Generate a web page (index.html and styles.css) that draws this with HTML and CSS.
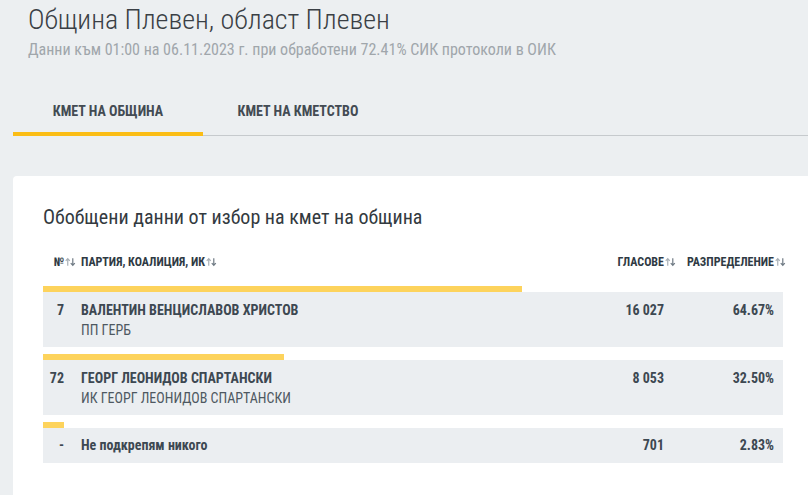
FILE: index.html
```html
<!DOCTYPE html>
<html lang="bg">
<head>
<meta charset="utf-8">
<title>Община Плевен</title>
<link rel="stylesheet" href="styles.css">
</head>
<body>
<header class="page-head">
  <h1 class="title">Община Плевен, област Плевен</h1>
  <p class="subtitle">Данни към 01:00 на 06.11.2023 г. при обработени 72.41% СИК протоколи в ОИК</p>
</header>
<nav class="tabs">
  <a class="tab active">КМЕТ НА ОБЩИНА</a>
  <a class="tab">КМЕТ НА КМЕТСТВО</a>
</nav>
<section class="card">
  <h2 class="card-title">Обобщени данни от избор на кмет на община</h2>
  <div class="table">
    <div class="thead">
      <div class="th num"><span class="sort-wrap">№<svg class="sort" viewBox="0 0 12 10"><path d="M3 9V1.5M0.8 3.7L3 1.3 5.2 3.7" fill="none" stroke="#a9b0b7" stroke-width="1.3"/><path d="M8.5 1v7.5M6.3 6.3L8.5 8.7 10.7 6.3" fill="none" stroke="#6f7a84" stroke-width="1.3"/></svg></span></div>
      <div class="th name"><span class="sort-wrap">ПАРТИЯ, КОАЛИЦИЯ, ИК<svg class="sort" viewBox="0 0 12 10"><path d="M3 9V1.5M0.8 3.7L3 1.3 5.2 3.7" fill="none" stroke="#a9b0b7" stroke-width="1.3"/><path d="M8.5 1v7.5M6.3 6.3L8.5 8.7 10.7 6.3" fill="none" stroke="#6f7a84" stroke-width="1.3"/></svg></span></div>
      <div class="th votes"><span class="sort-wrap">ГЛАСОВЕ<svg class="sort" viewBox="0 0 12 10"><path d="M3 9V1.5M0.8 3.7L3 1.3 5.2 3.7" fill="none" stroke="#a9b0b7" stroke-width="1.3"/><path d="M8.5 1v7.5M6.3 6.3L8.5 8.7 10.7 6.3" fill="none" stroke="#6f7a84" stroke-width="1.3"/></svg></span></div>
      <div class="th pct"><span class="sort-wrap">РАЗПРЕДЕЛЕНИЕ<svg class="sort" viewBox="0 0 12 10"><path d="M3 9V1.5M0.8 3.7L3 1.3 5.2 3.7" fill="none" stroke="#a9b0b7" stroke-width="1.3"/><path d="M8.5 1v7.5M6.3 6.3L8.5 8.7 10.7 6.3" fill="none" stroke="#6f7a84" stroke-width="1.3"/></svg></span></div>
    </div>

    <div class="entry">
      <div class="bar" style="width:64.67%"></div>
      <div class="row">
        <div class="cell num">7</div>
        <div class="cell name"><div class="cand">ВАЛЕНТИН ВЕНЦИСЛАВОВ ХРИСТОВ</div><div class="party">ПП ГЕРБ</div></div>
        <div class="cell votes">16 027</div>
        <div class="cell pct">64.67%</div>
      </div>
    </div>

    <div class="entry">
      <div class="bar" style="width:32.50%"></div>
      <div class="row">
        <div class="cell num">72</div>
        <div class="cell name"><div class="cand">ГЕОРГ ЛЕОНИДОВ СПАРТАНСКИ</div><div class="party">ИК ГЕОРГ ЛЕОНИДОВ СПАРТАНСКИ</div></div>
        <div class="cell votes">8 053</div>
        <div class="cell pct">32.50%</div>
      </div>
    </div>

    <div class="entry">
      <div class="bar" style="width:2.83%"></div>
      <div class="row short">
        <div class="cell num">-</div>
        <div class="cell name"><div class="cand">Не подкрепям никого</div></div>
        <div class="cell votes">701</div>
        <div class="cell pct">2.83%</div>
      </div>
    </div>
  </div>
</section>
</body>
</html>
```

FILE: styles.css
```css
html, body {
  margin: 0;
  padding: 0;
}
body {
  background: #eceff1;
  font-family: "Roboto Condensed", "Liberation Sans Narrow", "DejaVu Sans Condensed", Roboto, sans-serif;
  color: #3b4650;
  overflow: hidden;
}
.page-head {
  padding: 4px 0 0 28px;
}
.title {
  margin: 0;
  font-size: 28px;
  line-height: 32px;
  font-weight: 300;
  color: #3a3f45;
}
.subtitle {
  margin: 4px 0 0;
  font-size: 16px;
  line-height: 20px;
  color: #a0a6ab;
}
.tabs {
  display: flex;
  margin: 26px 0 0 13px;
  border-bottom: 1px solid #c6cacd;
  height: 49px;
}
.tab {
  width: 190px;
  display: flex;
  align-items: center;
  justify-content: center;
  font-size: 14px;
  font-weight: 700;
  color: #434b53;
  box-sizing: border-box;
}
.tab.active {
  border-bottom: 4px solid #fbbd15;
  margin-bottom: -1px;
  padding-top: 4px;
}
.card {
  background: #fff;
  margin: 40px 0 0 13px;
  border-radius: 4px 0 0 0;
  padding: 29px 25px 25px 30px;
}
.card-title {
  margin: 0;
  font-size: 20px;
  line-height: 24px;
  font-weight: 400;
  color: #333a40;
}
.table {
  margin-top: 23px;
}
.thead, .row {
  display: grid;
  grid-template-columns: 21px 1fr 100px 93px;
  column-gap: 17px;
  padding-right: 9px;
}
.thead {
  height: 20px;
  align-items: center;
  margin-bottom: 14px;
}
.th {
  font-size: 12px;
  font-weight: 700;
  color: #2f3a44;
  white-space: nowrap;
}
.sort-wrap {
  position: relative;
}
.sort {
  position: absolute;
  left: 100%;
  top: 2px;
  width: 11px;
  height: 10px;
  margin-left: 1px;
}
.th.num, .cell.num,
.th.votes, .cell.votes,
.th.pct, .cell.pct {
  text-align: right;
}
.entry {
  margin-bottom: 7px;
}
.bar {
  height: 6px;
  background: #fdd35c;
}
.row {
  background: #ebeef1;
  padding-top: 8px;
  padding-bottom: 7px;
  min-height: 40px;
}
.row.short {
  min-height: 0;
  padding-top: 7px;
  padding-bottom: 8px;
}
.cell {
  font-size: 14px;
  line-height: 20px;
  font-weight: 700;
  color: #3d4852;
}
.party {
  font-weight: 400;
  color: #4e5861;
}
```
